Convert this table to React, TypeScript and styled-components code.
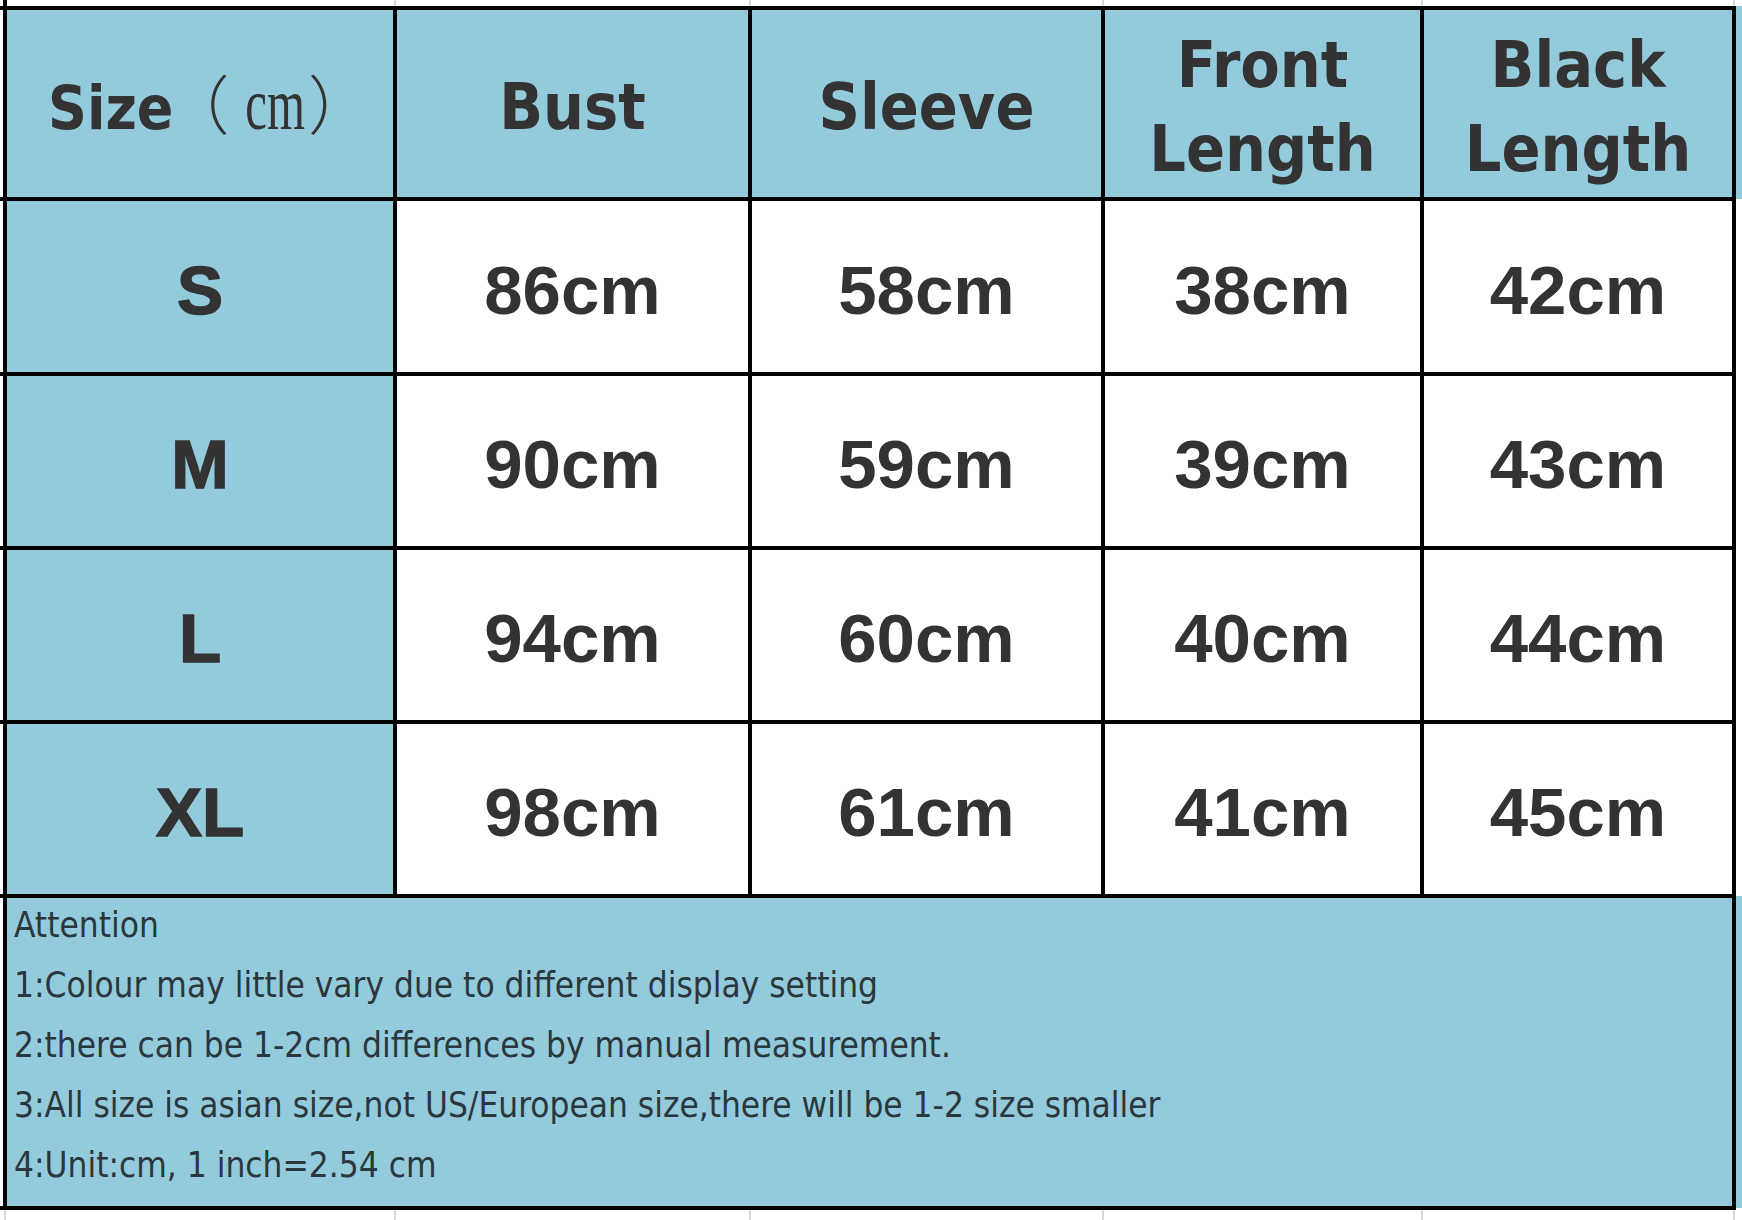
import React from "react";
import styled, { createGlobalStyle } from "styled-components";

const COLS = [386, 351, 349, 315, 308];
const ROWS = [187, 171, 170, 170, 170, 308];
const BORDER = 4;
const BLUE = "#94cbdc";
const INK = "#333333";

const GlobalStyle = createGlobalStyle`
  html, body {
    margin: 0;
    padding: 0;
    background: #ffffff;
  }
  body {
    width: 1742px;
    height: 1220px;
    overflow: hidden;
  }
`;

const Page = styled.div`
  display: flex;
  flex-direction: column;
  width: 1742px;
  height: 1220px;
  background: #ffffff;
`;

const Strip = styled.div<{ $h: number }>`
  display: flex;
  height: ${(p) => p.$h}px;
  flex: ${(p) => (p.$h === 0 ? 1 : "none")};
`;

const Seg = styled.div<{ $w: number }>`
  width: ${(p) => p.$w}px;
  flex: none;
`;

const GridLine = styled.div<{ $dark?: boolean }>`
  width: ${(p) => (p.$dark ? 4 : 2)}px;
  margin: 0 ${(p) => (p.$dark ? 0 : 1)}px;
  flex: none;
  background: ${(p) => (p.$dark ? "#000000" : "#d9d9d9")};
`;

const Middle = styled.div`
  display: flex;
  align-items: flex-start;
`;

const Gutter = styled.div<{ $w: number }>`
  display: flex;
  flex-direction: column;
  width: ${(p) => p.$w}px;
  flex: none;
`;

const GutterPiece = styled.div<{ $h: number; $tone: "black" | "white" | "blue" }>`
  height: ${(p) => p.$h}px;
  background: ${(p) =>
    p.$tone === "black" ? "#000000" : p.$tone === "blue" ? BLUE : "#ffffff"};
`;

const Table = styled.div`
  display: grid;
  grid-template-columns: ${COLS.map((c) => `${c}px`).join(" ")};
  grid-template-rows: ${ROWS.map((r) => `${r}px`).join(" ")};
  gap: ${BORDER}px;
  padding: ${BORDER}px;
  background: #000000;
  flex: none;
`;

const Cell = styled.div<{ $blue?: boolean; $flat?: boolean }>`
  display: flex;
  align-items: center;
  justify-content: center;
  text-align: center;
  padding-top: ${(p) => (p.$flat ? 0 : 7)}px;
  box-sizing: border-box;
  background: ${(p) => (p.$blue ? BLUE : "#ffffff")};
  color: ${INK};
`;

const HeadText = styled.div`
  font-family: "DejaVu Sans Condensed", "DejaVu Sans", sans-serif;
  font-stretch: semi-condensed;
  font-weight: 700;
  font-size: 64px;
  line-height: 84px;
  color: ${INK};
`;

const SizeHead = styled.div`
  display: flex;
  align-items: baseline;
  font-family: "DejaVu Sans Condensed", "DejaVu Sans", sans-serif;
  font-stretch: semi-condensed;
  font-weight: 700;
  font-size: 60px;
  color: ${INK};
  margin: 0 0 6px 20px;
`;

const Paren = styled.span<{ $open?: boolean }>`
  font-family: "Noto Sans CJK SC", sans-serif;
  font-weight: 300;
  font-size: 64px;
  margin-left: ${(p) => (p.$open ? -8 : 0)}px;
`;

const Unit = styled.span`
  display: inline-block;
  font-family: "Liberation Serif", serif;
  font-weight: 400;
  font-size: 74px;
  transform: scaleX(0.66);
  margin: 0 -13px 0 1px;
`;

const Value = styled.span<{ $heavy?: boolean }>`
  font-family: "Liberation Sans", Arial, sans-serif;
  font-weight: 700;
  font-size: 69px;
  line-height: 1;
  color: ${INK};
  -webkit-text-stroke: ${(p) => (p.$heavy ? "1.5px " + INK : "0")};
`;

const NoteCell = styled.div`
  grid-column: 1 / -1;
  background: ${BLUE};
  padding: 0 0 0 7px;
  font-family: "DejaVu Sans Condensed", "DejaVu Sans", sans-serif;
  font-stretch: semi-condensed;
  font-weight: 400;
  font-size: 34.9px;
  color: #2a373c;
  white-space: nowrap;
`;

const NoteLine = styled.div`
  height: 60px;
  line-height: 54px;
`;

const headers = [["Bust"], ["Sleeve"], ["Front", "Length"], ["Black", "Length"]];

const rows: { size: string; values: string[] }[] = [
  { size: "S", values: ["86cm", "58cm", "38cm", "42cm"] },
  { size: "M", values: ["90cm", "59cm", "39cm", "43cm"] },
  { size: "L", values: ["94cm", "60cm", "40cm", "44cm"] },
  { size: "XL", values: ["98cm", "61cm", "41cm", "45cm"] },
];

const notes = [
  "Attention",
  "1:Colour may little vary due to different display setting",
  "2:there can be 1-2cm differences by manual measurement.",
  "3:All size is asian size,not US/European size,there will be 1-2 size smaller",
  "4:Unit:cm, 1 inch=2.54 cm",
];

function EdgeStrip({ h, top }: { h: number; top: boolean }) {
  return (
    <Strip $h={h}>
      <Seg $w={3} />
      <GridLine $dark={top} />
      {COLS.map((c, i) => (
        <React.Fragment key={i}>
          <Seg $w={c} />
          <GridLine />
        </React.Fragment>
      ))}
    </Strip>
  );
}

export default function App() {
  const leftPieces: React.ReactNode[] = [];
  ROWS.forEach((r, i) => {
    leftPieces.push(<GutterPiece key={`l${i}`} $h={BORDER} $tone="black" />);
    leftPieces.push(<GutterPiece key={`g${i}`} $h={r} $tone="white" />);
  });
  leftPieces.push(<GutterPiece key="lend" $h={BORDER} $tone="black" />);

  const dataHeight = ROWS.slice(1, 5).reduce((a, b) => a + b + BORDER, 0);

  return (
    <>
      <GlobalStyle />
      <Page>
        <EdgeStrip h={6} top />
        <Middle>
          <Gutter $w={3}>{leftPieces}</Gutter>
          <Table>
            <Cell $blue $flat>
              <SizeHead>
                Size<Paren $open>（</Paren>
                <Unit>cm</Unit>
                <Paren>）</Paren>
              </SizeHead>
            </Cell>
            {headers.map((lines, i) => (
              <Cell $blue key={i}>
                <HeadText>
                  {lines.map((l, j) => (
                    <div key={j}>{l}</div>
                  ))}
                </HeadText>
              </Cell>
            ))}
            {rows.map((row) => (
              <React.Fragment key={row.size}>
                <Cell $blue>
                  <Value $heavy>{row.size}</Value>
                </Cell>
                {row.values.map((v, j) => (
                  <Cell key={j}>
                    <Value>{v}</Value>
                  </Cell>
                ))}
              </React.Fragment>
            ))}
            <NoteCell>
              {notes.map((n, i) => (
                <NoteLine key={i}>{n}</NoteLine>
              ))}
            </NoteCell>
          </Table>
          <Gutter $w={6}>
            <GutterPiece $h={BORDER + ROWS[0] + 2} $tone="blue" />
            <GutterPiece $h={dataHeight} $tone="white" />
            <GutterPiece $h={ROWS[5] + 2 + 2} $tone="blue" />
          </Gutter>
        </Middle>
        <EdgeStrip h={0} top={false} />
      </Page>
    </>
  );
}
